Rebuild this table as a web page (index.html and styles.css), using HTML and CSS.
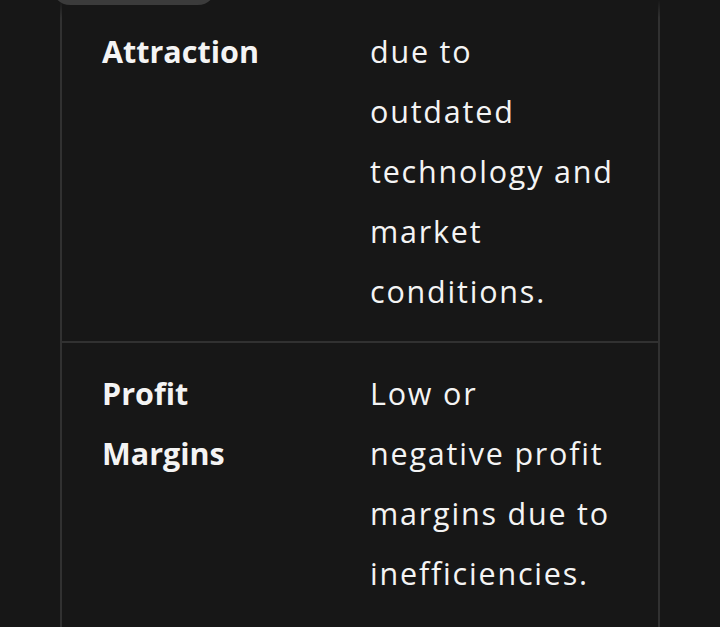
FILE: index.html
```html
<!DOCTYPE html>
<html lang="en">
<head>
<meta charset="utf-8">
<link rel="stylesheet" href="styles.css">
</head>
<body>
<div class="pill"></div>
<div class="fade"></div>
<div class="page">
  <div class="table">
    <div class="row">
      <div class="cell head">Attraction</div>
      <div class="cell value">due to outdated technology and market conditions.</div>
    </div>
    <div class="row">
      <div class="cell head">Profit Margins</div>
      <div class="cell value">Low or negative profit margins due to inefficiencies.</div>
    </div>
  </div>
</div>
</body>
</html>
```
FILE: styles.css
```css
html, body {
  margin: 0;
  padding: 0;
  background: #171717;
  overflow: hidden;
}
body {
  font-family: "Open Sans", "Lato", sans-serif;
  color: #f4f4f4;
  font-size: 30.5px;
  line-height: 60px;
  font-variant-ligatures: none;
}
.pill {
  position: absolute;
  left: 52px;
  top: -40px;
  width: 164px;
  height: 45px;
  border-radius: 18px;
  background: #3b3b3b;
  z-index: 2;
}
.fade {
  position: absolute;
  left: 0;
  top: 0;
  width: 100%;
  height: 18px;
  background: linear-gradient(#171717, rgba(23, 23, 23, 0));
  z-index: 1;
}
.page {
  padding-top: 1px;
  padding-left: 60px;
}
.table {
  width: 596px;
  border-left: 2px solid #313131;
  border-right: 2px solid #313131;
}
.row {
  display: grid;
  grid-template-columns: 288px 308px;
  border-bottom: 2px solid #313131;
}
.row:last-child {
  border-bottom: none;
}
.cell {
  padding: 20px 20px 20px 40px;
}
.row:last-child .cell {
  padding-bottom: 24px;
}
.head {
  font-weight: 700;
  padding-right: 100px;
}
.value {
  letter-spacing: 1.8px;
  padding-left: 20px;
  padding-right: 41px;
}
```
